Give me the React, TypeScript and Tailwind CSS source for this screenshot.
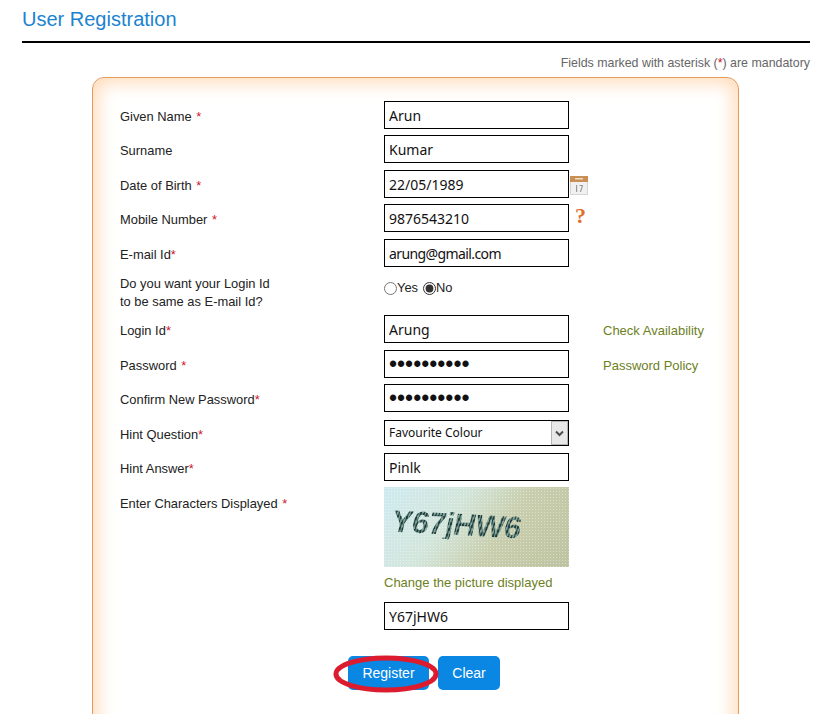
import type { ReactNode } from "react";

const inputClass =
  "h-[28px] w-[185px] border border-black bg-white pl-[4px] text-[14px] text-[#111] outline-none font-['Noto_Sans',sans-serif]";
const passwordClass =
  "h-[28px] w-[185px] border border-black bg-white pl-[4px] text-[23px] text-[#111] outline-none font-['Liberation_Sans',sans-serif]";

function Star({ tight }: { tight?: boolean }) {
  return <span className={tight ? "text-[#d0112b]" : "ml-[1px] text-[#d0112b]"}>*</span>;
}

function Row({
  label,
  className,
  children,
  side,
}: {
  label: ReactNode;
  className: string;
  children: ReactNode;
  side?: ReactNode;
}) {
  return (
    <div className={`flex items-center ${className}`}>
      <div className="w-[264px] shrink-0 pt-[4px]">{label}</div>
      {children}
      {side}
    </div>
  );
}

function SideLink({ children }: { children: ReactNode }) {
  return <a className="ml-[34px] pt-[3px] text-[13px] text-[#6d7f24]">{children}</a>;
}

function CalendarIcon() {
  return (
    <svg width="18" height="19" viewBox="0 0 18 19" className="ml-[1px] mt-[2px]">
      <rect x="0.5" y="0.5" width="17" height="18" fill="#f1f1f1" stroke="#d5d5d5" />
      <rect x="0" y="0" width="18" height="6" fill="#c98f55" />
      <rect x="5" y="2" width="8" height="1.5" fill="#eedcc6" />
      <path d="M6 9h1.2v7H6zM9.5 9h3.5v1l-2 6h-1.2l2-6H9.5z" fill="#9a9a9a" />
    </svg>
  );
}

function Captcha() {
  return (
    <div className="flex h-[80px] w-[185px] items-center overflow-hidden bg-[radial-gradient(circle,rgba(255,255,255,0.4)_1px,transparent_1px),linear-gradient(125deg,#cfeaf0_0%,#d3e6dc_35%,#c9cfae_62%,#bdc2a0_100%)] bg-[length:3px_3px,100%_100%]">
      <span className="ml-[8px] mt-[-5px] rotate-[3deg] skew-x-[-8deg] bg-[repeating-linear-gradient(100deg,#1f3a3a_0px,#1f3a3a_1.5px,#7fa39b_1.5px,#7fa39b_3px)] bg-clip-text text-[31px] font-bold leading-none tracking-[-0.5px] text-transparent font-['Liberation_Sans',sans-serif]">
        Y67jHW6
      </span>
    </div>
  );
}

export default function App() {
  return (
    <div className="h-[714px] w-[824px] overflow-hidden bg-white px-[22px] pt-[6px] text-[12.9px] leading-[18px] text-[#222] font-['Liberation_Sans',sans-serif]">
      <h1 className="pb-[8px] text-[20px] leading-[27px] text-[#1b83d0]">User Registration</h1>
      <div className="h-[2px] w-[788px] bg-black" />
      <p className="mt-[11px] h-[17px] w-[788px] text-right text-[12.4px] text-[#666]">
        Fields marked with asterisk (<span className="text-[#d0112b]">*</span>) are mandatory
      </p>

      <div className="mt-[6px] ml-[70px] h-[660px] w-[647px] rounded-[12px] border border-[#e59a5c] bg-white pl-[27px] pt-[23px] shadow-[inset_0_0_18px_5px_#ffdcba]">
        <Row className="mb-[6px]" label={<>Given Name <Star /></>}>
          <input readOnly defaultValue="Arun" className={inputClass} />
        </Row>
        <Row className="mb-[7px]" label="Surname">
          <input readOnly defaultValue="Kumar" className={inputClass} />
        </Row>
        <Row className="mb-[6px]" label={<>Date of Birth <Star /></>} side={<CalendarIcon />}>
          <input readOnly defaultValue="22/05/1989" className={inputClass} />
        </Row>
        <Row
          className="mb-[7px]"
          label={<>Mobile Number <Star /></>}
          side={
            <span className="ml-[6px] mt-[-4px] text-[22px] font-bold leading-none text-[#e2702a] font-['Liberation_Serif',serif]">
              ?
            </span>
          }
        >
          <input readOnly defaultValue="9876543210" className={inputClass} />
        </Row>
        <Row label={<>E-mail Id<Star tight /></>} className="mb-0">
          <input readOnly defaultValue="arung@gmail.com" className={`${inputClass} tracking-[-0.6px]`} />
        </Row>

        <div className="flex h-[48px] items-center">
          <div className="w-[264px] shrink-0 pt-[3px]">
            Do you want your Login Id
            <br />
            to be same as E-mail Id?
          </div>
          <label className="mt-[-6px] mr-[5px] flex items-center">
            <input type="radio" name="same" readOnly className="m-0 h-[13px] w-[13px] accent-[#333]" />
            <span>Yes</span>
          </label>
          <label className="mt-[-6px] flex items-center">
            <input type="radio" name="same" readOnly defaultChecked className="m-0 h-[13px] w-[13px] accent-[#333]" />
            <span>No</span>
          </label>
        </div>

        <Row className="mb-[7px]" label={<>Login Id<Star tight /></>} side={<SideLink>Check Availability</SideLink>}>
          <input readOnly defaultValue="Arung" className={inputClass} />
        </Row>
        <Row className="mb-[6px]" label={<>Password <Star /></>} side={<SideLink>Password Policy</SideLink>}>
          <input readOnly type="password" defaultValue="Arunkumar1" className={passwordClass} />
        </Row>
        <Row className="mb-[8px]" label={<>Confirm New Password<Star tight /></>}>
          <input readOnly type="password" defaultValue="Arunkumar1" className={passwordClass} />
        </Row>
        <Row className="mb-[7px]" label={<>Hint Question<Star tight /></>}>
          <div className="relative h-[26px] w-[185px]">
            <select className="h-full w-full appearance-none rounded-none border border-black bg-white pl-[4px] text-[12px] text-[#111] outline-none font-['Noto_Sans',sans-serif]">
              <option>Favourite Colour</option>
            </select>
            <span className="pointer-events-none absolute right-[1px] top-[1px] flex h-[24px] w-[17px] items-center justify-center border border-[#b5b5b5] bg-[#e8e8e8]">
              <svg width="9" height="7" viewBox="0 0 9 7">
                <path d="M1 1.5 4.5 5 8 1.5" fill="none" stroke="#4d4d4d" strokeWidth="2" />
              </svg>
            </span>
          </div>
        </Row>
        <Row className="mb-[6px]" label={<>Hint Answer<Star tight /></>}>
          <input readOnly defaultValue="Pinlk" className={inputClass} />
        </Row>

        <div className="flex">
          <div className="w-[264px] shrink-0 pt-[8px]">
            Enter Characters Displayed <Star />
          </div>
          <div>
            <Captcha />
            <a className="mt-[7px] block text-[13px] text-[#6d7f24]">Change the picture displayed</a>
            <input readOnly defaultValue="Y67jHW6" className={`${inputClass} mt-[10px] block`} />
          </div>
        </div>

        <div className="relative ml-[228px] mt-[26px] flex w-fit gap-[9px]">
          <button className="h-[34px] w-[81px] rounded-[5px] bg-[#0a87e3] text-[14px] text-white">Register</button>
          <button className="h-[34px] w-[62px] rounded-[5px] bg-[#0a87e3] text-[14px] text-white">Clear</button>
          <svg width="106" height="38" viewBox="0 0 106 38" className="pointer-events-none absolute left-[-15px] top-[-1px]">
            <ellipse cx="53" cy="19" rx="50" ry="16" fill="none" stroke="#dc1c2e" strokeWidth="5" />
          </svg>
        </div>
      </div>
    </div>
  );
}
